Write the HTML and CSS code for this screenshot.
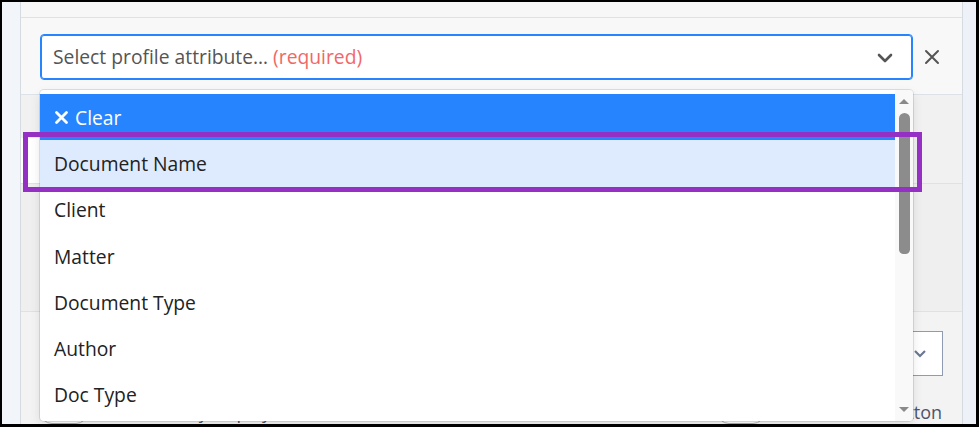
FILE: index.html
```html
<!DOCTYPE html>
<html lang="en">
<head>
<meta charset="utf-8">
<title>Select profile attribute</title>
<link rel="stylesheet" href="styles.css">
</head>
<body>
<div class="frame">
  <div class="strip-left"></div>
  <div class="panel">
    <div class="topband"></div>
    <div class="header">
      <div class="select">
        <span class="placeholder">Select profile attribute… <span class="required">(required)</span></span>
        <svg class="chevron" width="20" height="20" viewBox="0 0 20 20"><polyline points="4,8 10,14 16,8" fill="none" stroke="#555" stroke-width="2.6" stroke-linecap="round" stroke-linejoin="round"/></svg>
      </div>
      <svg class="close" width="16" height="16" viewBox="0 0 16 16"><path d="M2 2 L14 14 M14 2 L2 14" stroke="#555" stroke-width="2" stroke-linecap="round"/></svg>
    </div>
    <div class="section s2"><div class="card"></div></div>
    <div class="section s3"></div>
    <div class="section s4">
      <div class="mini-select">
        <svg width="14" height="10" viewBox="0 0 14 10"><polyline points="2,2 7,7 12,2" fill="none" stroke="#6b7894" stroke-width="2.2"/></svg>
      </div>
      <div class="toggles">
        <div class="toggle-item"><span class="toggle"></span><span class="toggle-label">Conditionally display</span></div>
        <div class="toggle-item"><span class="toggle"></span><span class="toggle-label">Disable back button</span></div>
      </div>
    </div>
  </div>
  <div class="strip-right"></div>

  <div class="menu">
    <div class="menu-list">
      <div class="option clear-opt">
        <svg class="clear-x" width="15" height="15" viewBox="0 0 15 15"><path d="M2.5 2.5 L12.5 12.5 M12.5 2.5 L2.5 12.5" stroke="#fff" stroke-width="2.8" stroke-linecap="round"/></svg>
        <span>Clear</span>
      </div>
      <div class="option focused">Document Name</div>
      <div class="option">Client</div>
      <div class="option">Matter</div>
      <div class="option">Document Type</div>
      <div class="option">Author</div>
      <div class="option">Doc Type</div>
    </div>
    <div class="scrollbar">
      <span class="arrow up"></span>
      <span class="thumb"></span>
      <span class="arrow down"></span>
    </div>
  </div>

  <div class="highlight"></div>
</div>
</body>
</html>
```
FILE: styles.css
```css
html, body {
  margin: 0;
  padding: 0;
  background: #fff;
}

body {
  font-family: "Open Sans", "Noto Sans", sans-serif;
}

.frame {
  width: 979px;
  height: 427px;
  box-sizing: border-box;
  border-style: solid;
  border-color: #000;
  border-width: 2px 3px 3px 2px;
  display: flex;
  position: relative;
  overflow: hidden;
}

.strip-left {
  width: 18px;
  background: #f2f5fa;
}

.strip-right {
  width: 13px;
  background: #eef2f8;
}

.panel {
  flex: 1;
  display: flex;
  flex-direction: column;
  border-left: 1px solid #d6dbe2;
  border-right: 1px solid #d6dbe2;
  background: #f7f7f7;
}

.topband {
  height: 15px;
  border-bottom: 1px solid #dde2e8;
  background: #f7f7f7;
}

.header {
  height: 62px;
  padding: 16px 0 0 19px;
  display: flex;
  align-items: flex-start;
  border-bottom: 1px solid #dde2e8;
  background: #f8f8f8;
}

.select {
  width: 873px;
  height: 46px;
  box-sizing: border-box;
  border: 1px solid #2684ff;
  border-radius: 4px;
  box-shadow: 0 0 0 1px #2684ff inset;
  background: #fff;
  display: flex;
  align-items: center;
  padding: 0 17px 0 12px;
}

.placeholder {
  flex: 1;
  font-size: 19.3px;
  color: #555;
  white-space: nowrap;
}

.required {
  color: #f06868;
}

.chevron {
  display: block;
}

.close {
  margin: 15px 0 0 11px;
  display: block;
}

.section {
  border-bottom: 1px solid #dde2e8;
  background: #f1f1f1;
}

.s2 {
  height: 88px;
}

.card {
  margin-top: 43px;
  height: 45px;
  margin-right: 60px;
  background: #fff;
}

.s3 {
  height: 130px;
  background: #efefef;
}

.s4 {
  flex: 1;
  border-bottom: none;
  background: #f3f3f3;
  display: flex;
  flex-direction: column;
}

.mini-select {
  align-self: flex-end;
  margin: 19px 19px 0 0;
  width: 300px;
  height: 45px;
  box-sizing: border-box;
  border: 1px solid #8e9bb2;
  background: #fff;
  display: flex;
  align-items: center;
  justify-content: flex-end;
  padding-right: 15px;
}

.mini-select svg {
  display: block;
}

.toggles {
  display: flex;
  justify-content: space-between;
  padding: 24px 20px 0 19px;
}

.toggle-item {
  display: flex;
  align-items: center;
  gap: 10px;
}

.toggle {
  width: 46px;
  height: 22px;
  border: 1px solid #aaa;
  border-radius: 12px;
  background: #fff;
}

.toggle-label {
  font-size: 18px;
  line-height: 22px;
  color: #4a566b;
}

.menu {
  position: absolute;
  left: 38px;
  top: 87.5px;
  width: 873px;
  height: 331px;
  background: #fff;
  border-radius: 4px;
  box-shadow: 0 0 0 1px rgba(0, 0, 0, 0.1), 0 4px 11px rgba(0, 0, 0, 0.1);
  display: flex;
  overflow: hidden;
}

.menu-list {
  flex: 1;
  padding-top: 4.5px;
}

.option {
  height: 46.3px;
  display: flex;
  align-items: center;
  padding-left: 14px;
  font-size: 19.3px;
  color: #222;
  white-space: nowrap;
}

.clear-opt {
  background: #2684ff;
  color: #fff;
  gap: 6px;
}

.clear-x {
  display: block;
  margin-top: 1px;
}

.focused {
  background: #deebff;
}

.scrollbar {
  width: 18px;
  background: #f9f9f9;
  display: flex;
  flex-direction: column;
  align-items: center;
  padding-top: 9px;
}

.arrow {
  width: 0;
  height: 0;
  border-left: 5.5px solid transparent;
  border-right: 5.5px solid transparent;
}

.arrow.up {
  border-bottom: 5.5px solid #8a8a8a;
}

.arrow.down {
  border-top: 5.5px solid #8a8a8a;
  margin-top: auto;
  margin-bottom: 9px;
}

.thumb {
  width: 11px;
  height: 141px;
  margin-top: 9px;
  border-radius: 6px 6px 5px 5px;
  background: #8c8c8c;
}

.highlight {
  position: absolute;
  left: 20.5px;
  top: 130px;
  width: 899px;
  height: 59.5px;
  box-sizing: border-box;
  border: 5.5px solid #9530c5;
}
```
